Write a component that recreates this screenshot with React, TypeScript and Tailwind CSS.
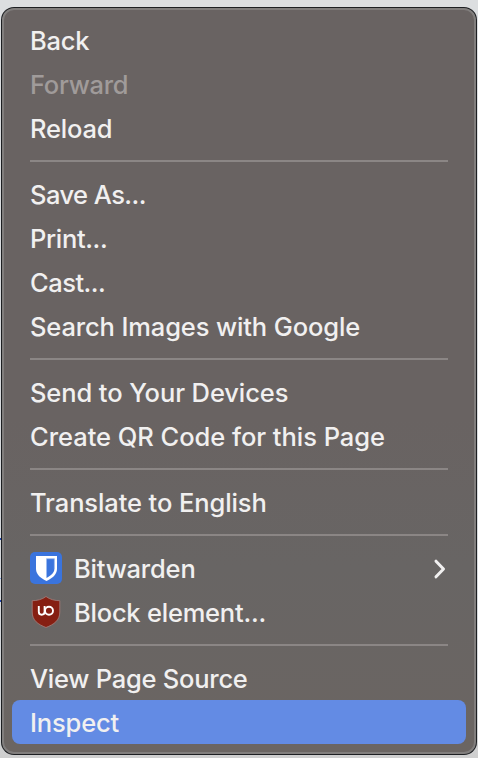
import type { ReactNode } from "react";

function Row({ children, className = "" }: { children: ReactNode; className?: string }) {
  return <div className={`flex h-11 items-center px-[26px] ${className}`}>{children}</div>;
}

function Label({ children, className = "" }: { children: ReactNode; className?: string }) {
  return <span className={`whitespace-nowrap pt-[2px] ${className}`}>{children}</span>;
}

function Separator() {
  return (
    <div className="flex h-[22px] items-center px-[26px]">
      <div className="h-[2px] w-full bg-[#8b8685]" />
    </div>
  );
}

function BitwardenIcon() {
  return (
    <svg className="mr-3 h-8 w-8 shrink-0" viewBox="0 0 32 32">
      <rect width="32" height="32" rx="5" fill="#3a74dd" />
      <path d="M6 4H27V17C27 22.5 22 26.5 16.5 29C11 26.5 6 22.5 6 17Z" fill="#fff" />
      <path d="M16.5 6.7H24.4V17C24.4 20.5 21 23.6 16.5 26Z" fill="#3a74dd" />
      <path d="M16.5 25V6.7H24.4V17" fill="none" stroke="#9dbbf0" strokeWidth=".8" />
    </svg>
  );
}

function BlockerIcon() {
  return (
    <svg className="mr-3 h-8 w-8 shrink-0" viewBox="0 0 32 32">
      <path
        d="M16 .5C12 3.5 7 4.7 2.2 4.7V16C2.2 24.5 8 28.4 16 31.5C24 28.4 29.8 24.5 29.8 16V4.7C25 4.7 20 3.5 16 .5Z"
        fill="#861f12"
        stroke="#a07976"
        strokeWidth=".9"
      />
      <path d="M8.8 10V15.8A2.9 2.9 0 0 0 14.6 15.8V10" fill="none" stroke="#fff" strokeWidth="1.9" />
      <circle cx="19" cy="14.8" r="4" fill="none" stroke="#fff" strokeWidth="1.9" />
    </svg>
  );
}

export default function App() {
  return (
    <div className="flex h-[758px] w-[478px] overflow-hidden bg-[linear-gradient(#dcdee0,#dcdee0_20px,#d4d7da_700px,#cfcfcf)] font-['Inter','Liberation_Sans',sans-serif] text-[25.5px] font-[450] tracking-[-0.1px] text-[#f1f0f0]">
      <div className="flex w-px shrink-0 flex-col pt-[538px]">
        <div className="h-[2px] bg-[#2448b0]" />
        <div className="mt-[38px] h-px bg-[#7f9ee0]" />
        <div className="mt-[21px] h-[2px] bg-[#2448b0]" />
      </div>
      <div className="mt-[7px] h-[748px] w-[476px] rounded-[13px] bg-[#1d1f22] p-px">
        <div className="h-full rounded-[12px] border-2 border-[#817e7d] bg-[linear-gradient(#696362,#696362_55%,#686564_75%,#6b6562)] pt-2">
          <Row><Label className="tracking-[-0.25px]">Back</Label></Row>
          <Row className="text-[#a09b9a]"><Label className="tracking-[-0.3px]">Forward</Label></Row>
          <Row><Label className="tracking-[-0.2px]">Reload</Label></Row>
          <Separator />
          <Row><Label className="tracking-[-0.55px]">Save As...</Label></Row>
          <Row><Label className="tracking-[-0.35px]">Print...</Label></Row>
          <Row><Label className="tracking-[-0.5px]">Cast...</Label></Row>
          <Row><Label className="tracking-[-0.13px]">Search Images with Google</Label></Row>
          <Separator />
          <Row><Label>Send to Your Devices</Label></Row>
          <Row><Label className="tracking-[-0.04px]">Create QR Code for this Page</Label></Row>
          <Separator />
          <Row><Label>Translate to English</Label></Row>
          <Separator />
          <Row>
            <BitwardenIcon />
            <Label className="tracking-[-0.2px]">Bitwarden</Label>
            <svg className="ml-auto h-[22px] w-[18px]" viewBox="0 0 18 22" fill="none">
              <path d="M6 4.2L13.5 12L6 19.8" stroke="#f1f0f0" strokeWidth="3" strokeLinecap="round" strokeLinejoin="round" />
            </svg>
          </Row>
          <Row><BlockerIcon /><Label className="tracking-[-0.23px]">Block element...</Label></Row>
          <Separator />
          <Row><Label className="tracking-[-0.25px]">View Page Source</Label></Row>
          <Row className="mx-2 rounded-lg bg-[#638be4] !px-[18px]"><Label className="tracking-[-0.15px]">Inspect</Label></Row>
        </div>
      </div>
    </div>
  );
}
